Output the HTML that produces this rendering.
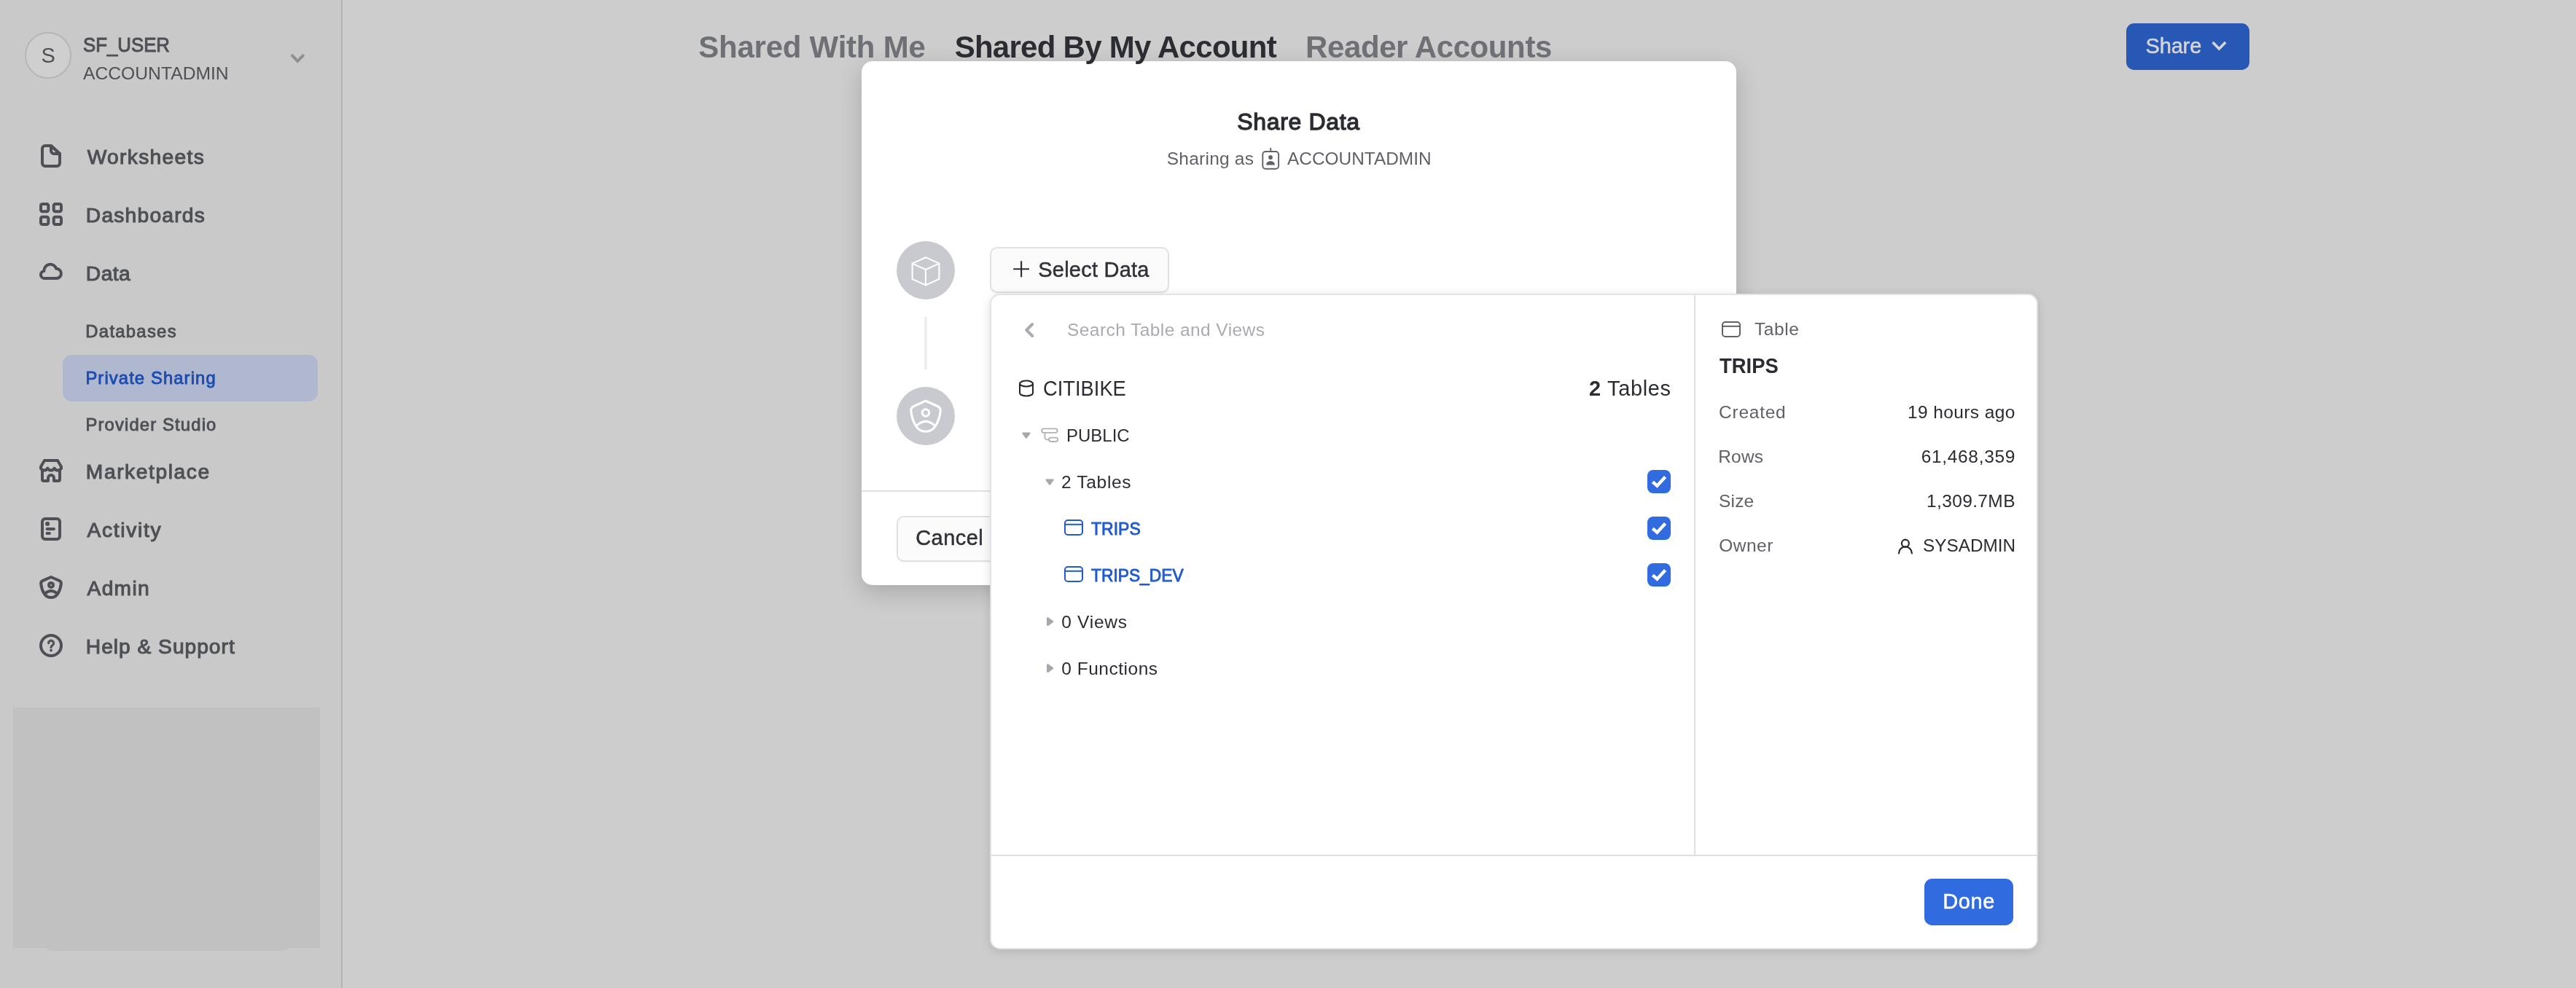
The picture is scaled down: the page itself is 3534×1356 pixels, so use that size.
<!DOCTYPE html>
<html lang="en"><head><meta charset="utf-8"><title>Private Sharing</title>
<style>
html,body{margin:0;padding:0}
body{width:3534px;height:1356px;position:relative;overflow:hidden;background:#cdcdcd;font-family:"Liberation Sans",sans-serif}
.a{position:absolute}
.t{position:absolute;white-space:pre;line-height:1}
svg{position:absolute;overflow:visible}
#sidebar{left:0;top:0;width:468px;height:1356px;background:#c9c9c9;border-right:2px solid #b4b5b6;box-sizing:content-box}
#avatar{left:34.3px;top:44.3px;width:63.4px;height:63.4px;box-sizing:border-box;border-radius:50%;border:2px solid #b6b6b7;background:#cfcfcf}
#sel{left:86px;top:487px;width:350px;height:64px;border-radius:12.5px;background:#afb8cf}
#greybox{left:18px;top:971px;width:421px;height:330px;background:#c1c1c1}
#greybox2{left:57px;top:1290px;width:344px;height:15px;border-radius:0 0 18px 18px/0 0 12px 12px;background:#c1c1c1}
#sharebtn{left:2917px;top:31.8px;width:169px;height:64.2px;border-radius:10.7px;background:#2858b5}
#modal{left:1182px;top:84px;width:1200px;height:718.5px;border-radius:15px;background:#fff;box-shadow:0 10px 32px rgba(0,0,0,.18)}
#mfoot{left:1182px;top:673px;width:1200px;height:1.8px;background:#e0e1e4}
.circ{width:80.4px;height:80.4px;border-radius:50%;background:#c9cacf}
#conn{left:1268.3px;top:435.2px;width:3.5px;height:71.4px;background:#eeeef1}
#selbtn{left:1358px;top:339px;width:246px;height:63px;box-sizing:border-box;border:2px solid #e0e1e5;border-radius:10px;background:#fbfbfc;box-shadow:0 1px 1.5px rgba(0,0,0,.05)}
#cancel{left:1230px;top:708px;width:170px;height:63px;box-sizing:border-box;border:2px solid #e0e1e5;border-radius:10px;background:#fbfbfc;box-shadow:0 1px 1.5px rgba(0,0,0,.05)}
#pop{left:1360px;top:405.4px;width:1434.3px;height:895.6px;border-radius:12px;background:#fff;box-shadow:0 0 0 1.9px #e2e3e6,0 3px 14px 1px rgba(0,0,0,.15)}
#pdiv{left:2324.3px;top:405.4px;width:1.6px;height:768px;background:#dfe0e3}
#pfoot{left:1360px;top:1173.2px;width:1434.6px;height:1.8px;background:#dfe0e3}
#done{left:2640.2px;top:1205.9px;width:121.8px;height:64.1px;border-radius:10.7px;background:#306be0}
.cb{width:32px;height:32px;border-radius:8px;background:#306be0;left:2260px}
</style></head><body>
<nav id="sidebar" class="a" aria-label="Main navigation"></nav>
<div id="avatar" class="a"></div>
<div id="sel" class="a"></div>
<div id="greybox" class="a"></div>
<div id="greybox2" class="a"></div>
<div id="sharebtn" class="a" role="button" aria-label="Share"></div>
<section id="modal" class="a" role="dialog" aria-label="Share Data"></section>
<div id="mfoot" class="a"></div>
<div class="a circ" style="left:1229.8px;top:330.7px"></div>
<div class="a circ" style="left:1229.9px;top:530.7px"></div>
<div id="conn" class="a"></div>
<div id="selbtn" class="a" role="button" aria-label="Select Data"></div>
<div id="cancel" class="a" role="button" aria-label="Cancel"></div>
<section id="pop" class="a" role="dialog" aria-label="Select Data"></section>
<div id="pdiv" class="a"></div>
<div id="pfoot" class="a"></div>
<div id="done" class="a" role="button" aria-label="Done"></div>
<div class="a cb" role="checkbox" aria-checked="true" style="top:645px"></div>
<div class="a cb" role="checkbox" aria-checked="true" style="top:709px"></div>
<div class="a cb" role="checkbox" aria-checked="true" style="top:773px"></div>
<!--ICONS_START-->
<svg class="a" style="left:0;top:0" width="3534" height="1356" viewBox="0 0 3534 1356" fill="none" stroke-linecap="round" stroke-linejoin="round">
<!-- sidebar chevron -->
<path d="M399.8 75.2 L408.3 83.8 L416.8 75.2" stroke="#8f8f91" stroke-width="4" stroke-linecap="butt" stroke-linejoin="miter"/>
<!-- nav icons: 32px boxes at x=54 -->
<g stroke="#4e5056" stroke-width="4">
 <!-- worksheets file -->
 <g transform="translate(54,198)">
  <path d="M16 2 H8 A4 4 0 0 0 4 6 V26 A4 4 0 0 0 8 30 H24 A4 4 0 0 0 28 26 V13 Z" transform="translate(0,0)"/>
  <path d="M16 2 V9 A4 4 0 0 0 20 13 H28 Z"/>
 </g>
 <!-- dashboards grid -->
 <g transform="translate(54,278)">
  <rect x="2" y="2" width="10.3" height="10.3" rx="2.2"/>
  <rect x="19.7" y="2" width="10.3" height="10.3" rx="2.2"/>
  <rect x="2" y="19.7" width="10.3" height="10.3" rx="2.2"/>
  <rect x="19.7" y="19.7" width="10.3" height="10.3" rx="2.2"/>
 </g>
 <!-- data cloud -->
 <g transform="translate(54,358)">
  <path d="M7 24 A5 5 0 0 1 6.43 14.03 A8.6 8.6 0 0 1 23.2 10.8 A6.6 6.6 0 0 1 23.4 24 Z"/>
 </g>
 <!-- marketplace store -->
 <g transform="translate(54,630)">
  <path d="M2 12.6 V10.6 L7 2 H25 L30 10.6 V12.6"/>
  <path d="M2 12.6 a5.13 5.13 0 0 0 9.33 0 a5.13 5.13 0 0 0 9.33 0 a5.13 5.13 0 0 0 9.33 0"/>
  <path d="M4 15 V28 A2 2 0 0 0 6 30 H12 V26 a4 4 0 0 1 8 0 V30 H26 A2 2 0 0 0 28 28 V15"/>
 </g>
 <!-- activity -->
 <g transform="translate(54,710)">
  <rect x="4" y="2" width="24" height="28" rx="4"/>
  <path d="M10.5 16 H20" stroke-width="3.8"/>
  <path d="M10.5 22 H14" stroke-width="3.8"/>
  <rect x="9.4" y="7.4" width="3.4" height="3" rx="1" stroke-width="2.6" fill="#4e5056"/>
 </g>
 <!-- admin shield -->
 <g transform="translate(54,790)">
  <path vector-effect="non-scaling-stroke" transform="translate(16,2) scale(0.685,0.667) translate(-1270,-550.2)" d="M1270 550.2 L1286.2 557.5 Q1290.6 559.5 1290.2 564 C1289.6 570 1287.5 578 1283.5 584.5 C1280.5 589.4 1275.5 592.2 1270 592.2 C1264.5 592.2 1259.5 589.4 1256.5 584.5 C1252.5 578 1250.4 570 1249.8 564 Q1249.4 559.5 1253.8 557.5 Z"/>
  <circle cx="16" cy="12.9" r="3"/>
  <path d="M7.8 24.6 Q16 17.4 24.2 24.6"/>
 </g>
 <!-- help -->
 <g transform="translate(54,870)">
  <circle cx="16" cy="16" r="14"/>
  <path d="M12.6 12.6 a3.5 3.5 0 1 1 5.4 3 c-1.3 0.9 -2 1.5 -2 3" stroke-width="3.2"/>
  <circle cx="16" cy="22.6" r="1.9" fill="#4e5056" stroke="none"/>
 </g>
</g>
<!-- share chevron -->
<path d="M3035.6 58 L3044.4 66.9 L3053.2 58" stroke="#d4d5d8" stroke-width="3.6" stroke-linecap="butt" stroke-linejoin="miter"/>
<!-- modal: cube -->
<g stroke="#fff" stroke-width="2.1">
 <path d="M1270 353.2 L1288.4 361.6 V383 L1270 391.4 L1251.6 383 V361.6 Z"/>
 <path d="M1251.6 361.6 L1270 370 L1288.4 361.6 M1270 370 V391.4"/>
</g>
<!-- modal: shield user (white) -->
<g stroke="#fff" stroke-width="3.1">
  <path d="M1270 550.2 L1286.2 557.5 Q1290.6 559.5 1290.2 564 C1289.6 570 1287.5 578 1283.5 584.5 C1280.5 589.4 1275.5 592.2 1270 592.2 C1264.5 592.2 1259.5 589.4 1256.5 584.5 C1252.5 578 1250.4 570 1249.8 564 Q1249.4 559.5 1253.8 557.5 Z"/>
  <circle cx="1269.9" cy="566.5" r="4.7"/>
  <path d="M1258 583.8 Q1270 572.8 1282 583.8"/>
</g>
<!-- role badge icon -->
<g stroke="#606268" stroke-width="1.9">
 <rect x="1732.3" y="208" width="21.8" height="23.8" rx="4"/>
 <path d="M1743.2 202.9 V208" stroke-linecap="butt"/>
 <circle cx="1743" cy="216" r="2.9" fill="#606268" stroke="none"/>
 <path d="M1737 226.4 a6 5.4 0 0 1 12 0 Z" fill="#606268" stroke="none"/>
</g>
<!-- plus -->
<path d="M1390.2 369.2 H1412 M1401.1 358.2 V380.2" stroke="#2a2c32" stroke-width="2.1" stroke-linecap="butt"/>
<!-- chevron left -->
<path d="M1416.2 445 L1408.2 453 L1416.2 461" stroke="#a9abb0" stroke-width="4"/>
<!-- db icon -->
<g stroke="#26282d" stroke-width="2.1">
 <path d="M1399 526.5 V539.5 a9 4 0 0 0 18 0 V526.5"/>
 <ellipse cx="1408" cy="526.5" rx="9" ry="4"/>
</g>
<!-- triangles -->
<g fill="#a6a8ad" stroke="#a6a8ad" stroke-width="2">
 <path d="M1403.3 594.6 H1412.5 L1407.9 600.8 Z"/>
 <path d="M1435.5 658.6 H1444.7 L1440.1 664.8 Z"/>
 <path d="M1437.5 848.7 V857.6 L1443.6 853.15 Z" stroke-width="3"/>
 <path d="M1437.5 912.7 V921.6 L1443.6 917.15 Z" stroke-width="3"/>
</g>
<!-- schema icon -->
<g stroke="#b0b2b7" stroke-width="1.8">
 <rect x="1429.1" y="588.4" width="21.5" height="5.4" rx="2.7"/>
 <rect x="1439" y="600.6" width="12.2" height="5.4" rx="2.7"/>
 <path d="M1433.4 593.8 V600.3 a3 3 0 0 0 3 3 H1439"/>
</g>
<!-- table icons -->
<g stroke="#1f5bd0" stroke-width="2">
 <rect x="1461" y="714" width="24" height="20" rx="4"/><path d="M1461 719.8 H1485" stroke-linecap="butt"/>
 <rect x="1461" y="778" width="24" height="20" rx="4"/><path d="M1461 783.8 H1485" stroke-linecap="butt"/>
</g>
<g stroke="#606268" stroke-width="2">
 <rect x="2363" y="442" width="24" height="20" rx="4"/><path d="M2363 447.8 H2387" stroke-linecap="butt"/>
</g>
<!-- checks -->
<g stroke="#fff" stroke-width="4.4" stroke-linecap="butt" stroke-linejoin="miter">
 <path d="M2267.3 661.3 L2273.4 666.7 L2284.6 654.6"/>
 <path d="M2267.3 725.3 L2273.4 730.7 L2284.6 718.6"/>
 <path d="M2267.3 789.3 L2273.4 794.7 L2284.6 782.6"/>
</g>
<!-- user icon -->
<g stroke="#26282d" stroke-width="2.2">
 <circle cx="2613.9" cy="745.7" r="5"/>
 <path d="M2605 759.4 a8.95 8.95 0 0 1 17.9 0"/>
</g>
</svg>
<!--ICONS_END-->
<div id="txt" class="a" style="left:0;top:0;width:3534px;height:1356px;will-change:transform">
<span class="t" style="left:56.38px;top:61.88px;font-size:29.0px;font-weight:400;color:#4e5056;">S</span>
<span class="t" style="left:114.49px;top:47.13px;font-size:28.2px;font-weight:400;color:#4e5056;-webkit-text-stroke:1.05px #4e5056;transform:scaleX(0.9150);transform-origin:0 0;">SF_USER</span>
<span class="t" style="left:114.40px;top:89.06px;font-size:24.5px;font-weight:400;color:#4e5056;transform:scaleX(1.0072);transform-origin:0 0;">ACCOUNTADMIN</span>
<span class="t" style="left:119.69px;top:201.13px;font-size:28.2px;font-weight:400;color:#4e5056;letter-spacing:1.31px;-webkit-text-stroke:1.05px #4e5056;">Worksheets</span>
<span class="t" style="left:117.84px;top:281.13px;font-size:28.2px;font-weight:400;color:#4e5056;letter-spacing:1.22px;-webkit-text-stroke:1.05px #4e5056;">Dashboards</span>
<span class="t" style="left:117.84px;top:361.13px;font-size:28.2px;font-weight:400;color:#4e5056;letter-spacing:0.45px;-webkit-text-stroke:1.05px #4e5056;">Data</span>
<span class="t" style="left:117.36px;top:442.85px;font-size:23.8px;font-weight:400;color:#4e5056;letter-spacing:1.30px;-webkit-text-stroke:0.9px #4e5056;">Databases</span>
<span class="t" style="left:117.38px;top:506.85px;font-size:23.8px;font-weight:400;color:#1d4db2;letter-spacing:1.11px;-webkit-text-stroke:0.9px #1d4db2;">Private Sharing</span>
<span class="t" style="left:117.38px;top:570.85px;font-size:23.8px;font-weight:400;color:#4e5056;letter-spacing:1.16px;-webkit-text-stroke:0.9px #4e5056;">Provider Studio</span>
<span class="t" style="left:117.84px;top:633.13px;font-size:28.2px;font-weight:400;color:#4e5056;letter-spacing:1.58px;-webkit-text-stroke:1.05px #4e5056;">Marketplace</span>
<span class="t" style="left:119.54px;top:713.13px;font-size:28.2px;font-weight:400;color:#4e5056;letter-spacing:1.70px;-webkit-text-stroke:1.05px #4e5056;">Activity</span>
<span class="t" style="left:119.54px;top:793.13px;font-size:28.2px;font-weight:400;color:#4e5056;letter-spacing:1.30px;-webkit-text-stroke:1.05px #4e5056;">Admin</span>
<span class="t" style="left:117.84px;top:873.13px;font-size:28.2px;font-weight:400;color:#4e5056;letter-spacing:0.98px;-webkit-text-stroke:1.05px #4e5056;">Help &amp; Support</span>
<span class="t" style="left:958.23px;top:44.47px;font-size:42.0px;font-weight:700;color:#6e7075;letter-spacing:-0.24px;">Shared With Me</span>
<span class="t" style="left:1309.65px;top:43.53px;font-size:42.0px;font-weight:700;color:#2b2d32;letter-spacing:-0.73px;">Shared By My Account</span>
<span class="t" style="left:1791.06px;top:44.45px;font-size:42.0px;font-weight:700;color:#6e7075;letter-spacing:-0.40px;">Reader Accounts</span>
<span class="t" style="left:2943.44px;top:49.22px;font-size:29.0px;font-weight:400;color:#d4d5d8;letter-spacing:-0.14px;-webkit-text-stroke:0.5px #d4d5d8;">Share</span>
<span class="t" style="left:1697.33px;top:151.04px;font-size:32px;font-weight:400;color:#2a2c32;letter-spacing:0.66px;-webkit-text-stroke:1.3px #2a2c32;">Share Data</span>
<span class="t" style="left:1600.79px;top:205.66px;font-size:24.5px;font-weight:400;color:#5f6167;letter-spacing:0.23px;">Sharing as</span>
<span class="t" style="left:1766.15px;top:205.66px;font-size:24.5px;font-weight:400;color:#5f6167;transform:scaleX(0.9965);transform-origin:0 0;">ACCOUNTADMIN</span>
<span class="t" style="left:1424.25px;top:355.85px;font-size:29.0px;font-weight:400;color:#2f3137;letter-spacing:0.23px;-webkit-text-stroke:0.5px #2f3137;">Select Data</span>
<span class="t" style="left:1256.15px;top:723.65px;font-size:29.0px;font-weight:400;color:#2f3137;letter-spacing:0.48px;-webkit-text-stroke:0.5px #2f3137;">Cancel</span>
<span class="t" style="left:1464.00px;top:440.69px;font-size:24.5px;font-weight:400;color:#a9abb0;letter-spacing:0.43px;">Search Table and Views</span>
<span class="t" style="left:1431.44px;top:519.48px;font-size:29.0px;font-weight:400;color:#2a2c32;transform:scaleX(0.9418);transform-origin:0 0;">CITIBIKE</span>
<span class="t" style="left:2180.00px;top:519.45px;font-size:29.0px;font-weight:400;color:#2a2c32;letter-spacing:0.66px;"><b>2</b> Tables</span>
<span class="t" style="left:1463.27px;top:585.66px;font-size:24.5px;font-weight:400;color:#2a2c32;transform:scaleX(0.9794);transform-origin:0 0;">PUBLIC</span>
<span class="t" style="left:1455.94px;top:649.66px;font-size:24.5px;font-weight:400;color:#2a2c32;letter-spacing:0.69px;">2 Tables</span>
<span class="t" style="left:1497.31px;top:714.25px;font-size:23.8px;font-weight:400;color:#1f5bd0;-webkit-text-stroke:0.9px #1f5bd0;transform:scaleX(0.9664);transform-origin:0 0;">TRIPS</span>
<span class="t" style="left:1497.31px;top:778.25px;font-size:23.8px;font-weight:400;color:#1f5bd0;-webkit-text-stroke:0.9px #1f5bd0;transform:scaleX(0.9577);transform-origin:0 0;">TRIPS_DEV</span>
<span class="t" style="left:1456.21px;top:841.76px;font-size:24.5px;font-weight:400;color:#2a2c32;letter-spacing:0.74px;">0 Views</span>
<span class="t" style="left:1456.21px;top:905.76px;font-size:24.5px;font-weight:400;color:#2a2c32;letter-spacing:0.52px;">0 Functions</span>
<span class="t" style="left:2406.92px;top:439.56px;font-size:24.5px;font-weight:400;color:#5f6167;letter-spacing:0.63px;">Table</span>
<span class="t" style="left:2358.85px;top:487.11px;font-size:30.0px;font-weight:700;color:#2a2c32;transform:scaleX(0.9141);transform-origin:0 0;">TRIPS</span>
<span class="t" style="left:2358.07px;top:554.30px;font-size:24.5px;font-weight:400;color:#5f6167;letter-spacing:0.74px;">Created</span>
<span class="t" style="left:2617.04px;top:554.26px;font-size:24.5px;font-weight:400;color:#2a2c32;letter-spacing:0.39px;">19 hours ago</span>
<span class="t" style="left:2357.16px;top:615.26px;font-size:24.5px;font-weight:400;color:#5f6167;letter-spacing:0.23px;">Rows</span>
<span class="t" style="left:2635.63px;top:615.32px;font-size:24.5px;font-weight:400;color:#2a2c32;letter-spacing:0.68px;">61,468,359</span>
<span class="t" style="left:2358.04px;top:676.49px;font-size:24.5px;font-weight:400;color:#5f6167;letter-spacing:0.16px;">Size</span>
<span class="t" style="left:2643.04px;top:676.46px;font-size:24.5px;font-weight:400;color:#2a2c32;letter-spacing:0.37px;">1,309.7MB</span>
<span class="t" style="left:2358.14px;top:737.30px;font-size:24.5px;font-weight:400;color:#5f6167;letter-spacing:0.54px;">Owner</span>
<span class="t" style="left:2637.54px;top:736.89px;font-size:24.5px;font-weight:400;color:#2a2c32;transform:scaleX(0.9926);transform-origin:0 0;">SYSADMIN</span>
<span class="t" style="left:2665.29px;top:1222.75px;font-size:29.0px;font-weight:400;color:#ffffff;letter-spacing:0.61px;-webkit-text-stroke:0.5px #ffffff;">Done</span>
</div>
</body></html>
